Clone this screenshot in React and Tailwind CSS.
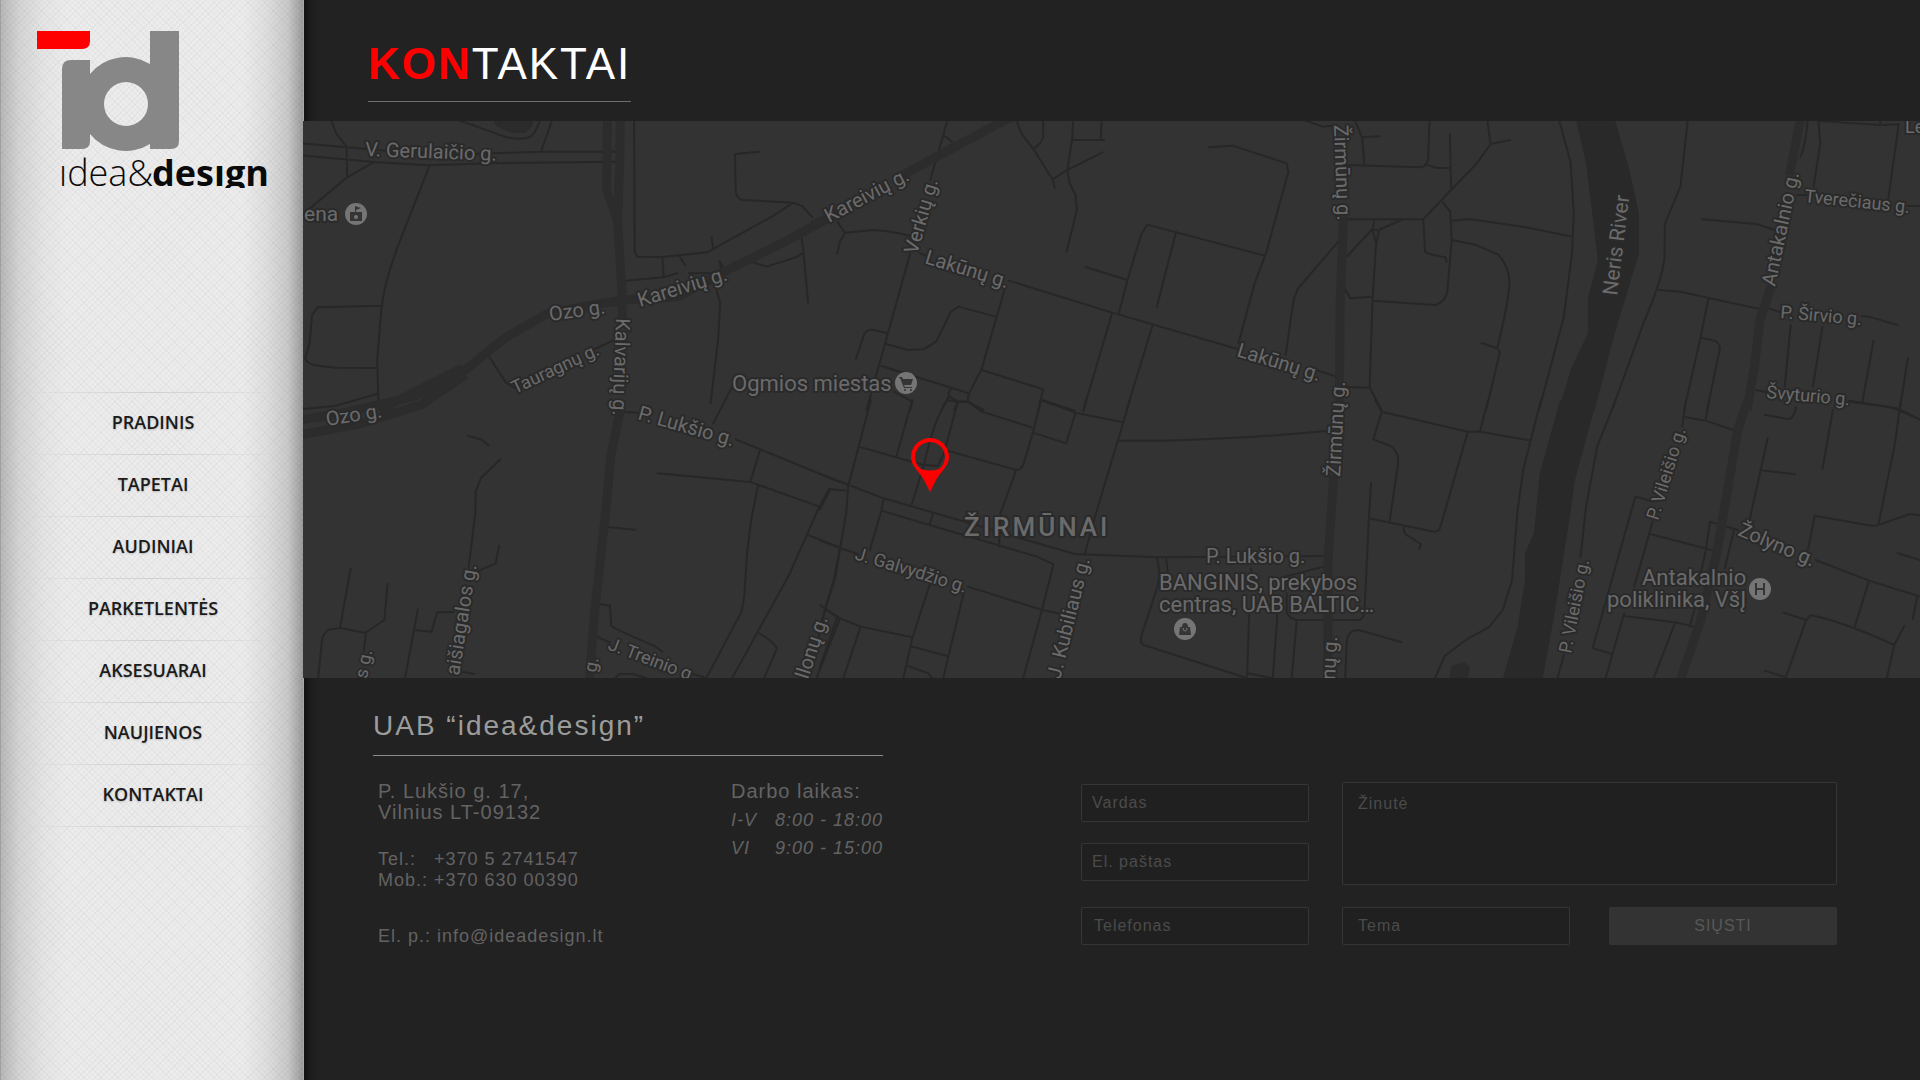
const NAV = ["PRADINIS", "TAPETAI", "AUDINIAI", "PARKETLENTĖS", "AKSESUARAI", "NAUJIENOS", "KONTAKTAI"];

// Map geometry is stored per tile; each tile has its own local units.
const TILES = [
  {
    at: "translate(300 120) scale(0.3444 0.3333)",
    main: [
      "M893 0L890 210L922 300L935 520L936 600",
      "M930 0L928 140L922 300",
      "M0 900L120 880L330 830L480 750L600 650L720 580L850 555L940 540L1100 530L1240 450L1400 370L1568 275",
      "M0 945L180 910L350 855L480 765",
      "M230 870L470 745",
    ],
    thin: [
      "M90 0L105 40L135 80L137 172", "M0 70L135 82L320 98L500 102L700 95L918 95", "M0 106L215 126L370 136L560 130L918 125",
      "M215 126L137 172L0 290", "M375 140L295 350Q245 480 236 570L224 720L228 860", "M236 557L52 562L35 585L28 670L15 715Q20 735 60 738L105 743L222 744",
      "M0 868L105 857L222 822", "M460 0L600 52Q660 65 680 40L698 0", "M732 0L700 94", "M970 0L972 395L980 410L1052 411L1182 397L1370 290L1432 248L1285 240Q1266 235 1265 210L1263 102L1333 95",
      "M1432 248L1458 258L1488 292", "M1195 350L1199 382", "M1052 411L1056 470", "M945 482L1056 472L1095 460", "M1103 411L1118 435", "M1130 460L1225 460L1218 422L1230 445",
      "M1318 428L1355 440L1440 412L1462 398L1456 350", "M1462 398L1475 548", "M1208 505L1220 550L1214 660L1192 850", "M550 712L598 788L625 805", "M850 690L915 658", "M1255 800L1200 910",
    ],
    areas: [["M560 0L570 18L610 38L655 38L675 18L678 0Z", "#2b2b2b"]],
  },
  {
    at: "translate(300 400) scale(0.3444 0.3333)",
    main: ["M930 30L903 165L888 330L870 500L855 640L840 840"],
    thin: [
      "M487 107L530 120L547 136", "M582 178L525 235L510 275L509 340L490 500", "M520 512L568 490L578 437", "M147 507L116 684L190 698L245 660L254 552", "M116 684L80 690L65 712L52 840", "M192 698L185 755",
      "M342 628L305 834", "M330 690L382 695L398 637L445 636", "M470 815L507 822", "M940 36L980 38", "M1265 118L1568 246", "M1335 152L1308 244", "M1038 220L1308 246L1508 320", "M893 381L972 389",
      "M1330 256L1310 360L1298 460L1290 590L1282 635L1180 834", "M1568 270L1536 268L1508 320L1420 525L1255 834", "M1474 405L1568 442L1550 540L1525 625L1500 740", "M1525 627L1568 655L1500 834", "M1328 697Q1370 720 1385 745L1348 834",
      "M870 612L900 617L904 678Q930 695 1030 738L1052 755", "M862 710L900 728", "M915 834L928 822L965 822L1005 834", "M1140 822L1180 834",
    ],
    areas: [],
  },
  {
    at: "translate(820 120) scale(0.3444 0.3333)",
    main: ["M-20 315L30 290", "M240 165L520 10L560 -10", "M1520 290L1510 560L1508 870"],
    thin: [
      "M370 0L358 45L320 180", "M358 45L383 65", "M50 305L72 338L58 365L50 402", "M72 338L155 330Q210 333 262 348", "M262 400L200 630L135 870", "M104 717L130 638Q140 628 155 630L198 640", "M192 672L255 690L300 688L338 664L380 575L402 560L510 590",
      "M536 508L470 745L432 822L428 845L475 870", "M178 738L432 820", "M382 805Q370 815 375 828L400 845L428 845", "M375 828L352 870", "M400 845L390 870", "M470 750L648 808L634 870", "M645 840L740 872",
      "M215 815L268 845L262 870", "M548 482L848 578L1215 688", "M290 400L310 408", "M570 0L585 40L620 88L675 178L682 203", "M648 0V50Q645 70 620 86", "M735 0L732 60L718 150L675 178", "M732 60H825", "M818 0L815 60", "M718 150L820 97",
      "M718 150L725 190L742 225L746 270L716 395", "M1130 82L1198 77L1355 130L1360 155L1295 400L1262 490L1215 670", "M1292 407L950 314L932 345L893 480L868 578", "M1034 335L978 560", "M770 441L893 480", "M848 580L765 870", "M966 615L890 870",
      "M1505 365L1388 505L1375 540L1352 705", "M1405 0L1460 20L1500 15", "M1440 750L1500 770",
    ],
    areas: [],
  },
  {
    at: "translate(820 400) scale(0.3444 0.3333)",
    main: ["M1492 225L1475 480L1475 840"],
    thin: [
      "M148 0L112 140L82 258L76 340L60 435L45 530L0 680", "M112 140L300 195L342 198", "M268 0L222 168", "M370 0Q330 60 303 190L266 315", "M400 5L360 160L342 198", "M370 0L400 5L430 5L470 35L615 82", "M370 152L570 210Q585 210 592 190L620 90L642 0", "M640 0L742 38L876 66", "M772 0L765 34",
      "M742 38L715 130L618 98", "M900 0L800 345L768 465", "M868 122H1000Q1250 115 1470 93", "M570 210L524 340L520 440", "M0 222L185 295L420 365L600 420L740 462L980 472L1460 468", "M185 295L178 332L318 375L630 470L678 493L645 628L590 834", "M328 340L318 375", "M178 332L145 450", "M0 422L60 445L110 462",
      "M430 560L645 630L700 642", "M318 555L268 715L242 834", "M418 575L358 834", "M0 615L50 652L118 680L268 712", "M50 652L0 800", "M118 680L68 834", "M268 740L370 768", "M252 797L315 820L325 834", "M82 272L30 268L0 328",
      "M978 472Q990 510 980 560L932 712Q930 730 940 735L1232 832", "M1005 475L1010 515", "M1246 645L1240 832", "M1328 645L1315 832", "M1240 820L1315 834", "M1384 662L1370 832", "M1355 580V635Q1360 655 1384 660H1568", "M1350 530L1462 500", "M1252 505V530",
    ],
    areas: [],
  },
  {
    at: "translate(1340 120) scale(0.37 0.3333)",
    main: ["M1244 0L1215 165", "M1165 500L1135 600L1120 740L1100 870"],
    thin: [
      "M40 0L60 55L66 135", "M60 52L107 49", "M242 0L238 120L232 133L262 144H298", "M0 134L215 142Q230 140 232 133", "M297 42L300 205", "M398 0L407 72L460 60", "M407 72L370 130L300 210L225 298H22", "M278 248L298 275L302 360L290 515Q285 545 258 555L88 542",
      "M302 302L350 297L510 323L628 350", "M302 360L365 374L428 404Q458 440 458 490Q455 550 425 685L432 697L395 870", "M382 669L425 685", "M592 0L623 125L632 280L627 400L605 590L538 870", "M225 298L230 395Q235 403 285 412L288 427", "M165 300L105 330L97 380L88 540L80 802L112 870",
      "M92 303L88 332L98 372", "M105 330H85L20 408", "M15 510L28 535L85 530", "M0 801L80 803", "M940 0L920 200L878 312L877 415Q870 480 820 610L735 870", "M862 510L920 515L1130 566", "M996 535L975 650L930 870", "M975 653L1015 663Q1030 675 1025 695L992 870", "M978 298L1125 312L1175 330",
      "M1264 0Q1258 80 1244 110", "M1293 0L1298 70L1280 200", "M1295 3L1460 15L1510 13L1482 235", "M1460 0V13", "M1235 225H1260", "M1533 258H1568", "M1160 566L1190 576", "M1410 588L1430 590L1507 615", "M1218 615L1202 800", "M1304 620L1278 800", "M1442 663L1412 845", "M1535 713L1513 868",
      "M1375 842L1510 866L1568 900", "M1125 810L1155 817",
    ],
    areas: [["M638 0L665 130L697 420L670 535V640L625 745L590 872H688L740 650L808 400V280L780 140L743 0Z", "#292929"]],
  },
  {
    at: "translate(1340 400) scale(0.37 0.3333)",
    main: ["M1102 0L1075 90L1052 240L1020 450L975 660L920 840"],
    thin: [
      "M95 0L113 35L345 95L380 95L512 121", "M113 35L90 118L140 140Q160 160 157 190L134 365", "M400 0L378 95", "M345 97L270 385Q265 395 255 395L78 355", "M84 248L78 355L66 640Q60 660 48 660H0", "M172 380Q170 400 185 408L218 432L215 447", "M543 0L495 210L480 330L465 540L440 630L402 682L340 720L283 768L257 834",
      "M745 0L695 140L665 320L650 470", "M605 765L588 834", "M165 726L50 690Q20 690 18 730L14 834", "M935 0L925 80", "M998 0L988 62", "M928 50L988 62L1068 92", "M845 305L798 290L683 744L735 762", "M845 365L795 560", "M768 640L718 834", "M838 402L1010 452", "M990 440L1000 365L1075 390", "M990 445L975 520", "M768 648L905 667L958 680", "M905 670L848 834", "M965 600L945 680",
      "M1065 390L1040 505", "M1156 115L1108 355", "M1136 210L1230 223", "M1148 44L1215 58Q1230 45 1232 22", "M1332 30L1304 207", "M1380 5L1490 22L1568 58", "M1516 0L1500 130L1455 375", "M1265 450L1283 347L1440 378L1455 375L1540 342L1568 346", "M1285 480L1430 542L1568 590", "M1430 542L1390 685",
      "M1507 460L1568 480", "M1560 590L1548 657", "M1198 638L1260 660L1272 645Q1360 665 1498 735L1478 834", "M1525 678L1498 735", "M1260 660L1205 832L1148 812",
    ],
    areas: [
      ["M595 0L540 220L524 400L500 460V540L480 680L440 836H548L580 640L622 345L635 240L694 0Z", "#292929"],
      ["M295 836L302 797L335 786L352 802L345 836Z", "#2b2b2b"],
    ],
  },
];

// text, x, y, rotation, size
const LABELS = [
  ["V. Gerulaičio g.", 365, 156, 2, 20], ["Kareivių g.", 640, 307, -17, 20], ["Ozo g.", 550, 321, -8, 20], ["Tauragnų g.", 515, 394, -25, 18],
  ["Kalvarijų g.", 616, 318, 92, 20], ["Ozo g.", 327, 426, -9, 20], ["P. Lukšio g.", 637, 419, 16, 20], ["aišiagalos g.", 459, 676, -81, 20], ["s g.", 367, 679, -80, 18],
  ["g.", 596, 673, -80, 18], ["J. Treinio g.", 607, 649, 21, 18], ["llonų g.", 808, 680, -72, 20], ["Kareivių g.", 829, 223, -28, 20], ["Verkių g.", 917, 255, -74, 20],
  ["Lakūnų g.", 924, 263, 17, 20], ["Lakūnų g.", 1236, 356, 17, 20], ["Ogmios miestas", 732, 391, 0, 22], ["Žirmūnų g.", 1334, 125, 88, 20], ["Žirmūnų g.", 1340, 477, -87, 20],
  ["nų g.", 1335, 680, -87, 20], ["J. Galvydžio g.", 854, 559, 17, 18], ["J. Kubiliaus g.", 1060, 680, -76, 20], ["P. Lukšio g.", 1206, 563, 0, 20],
  ["BANGINIS, prekybos", 1159, 590, 0, 22], ["centras, UAB BALTIC…", 1159, 612, 0, 22], ["Neris River", 1617, 296, -83, 21], ["Antakalnio g.", 1775, 287, -78, 20],
  ["Tverečiaus g.", 1804, 202, 6, 18], ["Le", 1905, 133, 0, 18], ["P. Širvio g.", 1780, 318, 5, 18], ["Švyturio g.", 1766, 398, 5, 18], ["P. Vileišio g.", 1658, 521, -73, 18],
  ["P. Vileišio g.", 1571, 654, -79, 18], ["Žolyno g.", 1737, 535, 23, 20], ["Antakalnio", 1642, 585, 0, 22], ["poliklinika, VšĮ", 1607, 607, 0, 22], ["ena", 304, 221, 0, 21],
];

function Logo() {
  return (
    <svg viewBox="37 31 233 157" className="block w-[233px]" role="img" aria-label="idea&design">
      <path d="M37 31H90V41Q90 49 82 49H37Z" fill="#f00" />
      <path
        d="M62 69Q62 60 71 60H90V74A46 46 0 0 1 150 64V31H179V141Q179 149 171 149H150V144A46 46 0 0 1 90 134V141Q90 149 82 149H62Z M126 82a22 22 0 1 0 0 44a22 22 0 1 0 0 -44Z"
        fill="#878787"
        fillRule="evenodd"
      />
      <text y="186" fontSize="36" fill="#0a0a0a" className="font-['Open_Sans',sans-serif]">
        <tspan x="59" fontWeight="300">ıdea&amp;</tspan>
        <tspan x="152" fontWeight="700">desıgn</tspan>
      </text>
    </svg>
  );
}

function CityMap() {
  return (
    <svg viewBox="303 121 1617 557" preserveAspectRatio="xMidYMid slice" className="block w-full bg-[#333]" role="img" aria-label="Žirmūnai">
      {TILES.map((t) => (
        <g key={t.at} transform={t.at} fill="none" strokeLinejoin="round">
          {t.areas.map(([d, c]) => <path key={d} d={d} fill={c} />)}
          <path d={t.thin.join("")} stroke="#272727" strokeWidth="2" vectorEffect="non-scaling-stroke" strokeLinecap="round" />
          <path d={t.main.join("")} stroke="#2c2c2c" strokeWidth="9" vectorEffect="non-scaling-stroke" />
        </g>
      ))}
      <g fill="#6a6a6a" stroke="#2a2a2a" strokeWidth="4" strokeLinejoin="round" style={{ paintOrder: "stroke" }} className="font-[Roboto,sans-serif]">
        {LABELS.map(([text, x, y, r, size]) => (
          <text key={`${x}-${y}`} fontSize={size} transform={`translate(${x} ${y}) rotate(${r})`}>{text}</text>
        ))}
        <text x="964" y="536" fontSize="26" fontWeight="500" letterSpacing="3">ŽIRMŪNAI</text>
      </g>
      <g fill="#757575">
        <circle cx="356" cy="214" r="11" />
        <circle cx="906" cy="383" r="11" />
        <circle cx="1185" cy="629" r="11" />
        <circle cx="1760" cy="589" r="11" />
      </g>
      <g fill="#353535">
        <path d="M355 206l6 2l-5 2v2h6v9h-12v-9h5Z" />
        <circle cx="356" cy="217" r="2" fill="#757575" />
        <path d="M899 377h3l1 2h10l-2 6h-7l1 2h7v1h-8l-4-10h-1Z" />
        <circle cx="905" cy="390" r="1" />
        <circle cx="911" cy="390" r="1" />
        <path d="M1180 627h2a3 4 0 0 1 6 0h2l1 8h-12Z" />
        <path d="M1183 628a2 3 0 0 0 4 0" fill="none" stroke="#757575" />
        <path d="M1755 583h2v5h6v-5h2v12h-2v-5h-6v5h-2Z" />
      </g>
      <path
        d="M930 492L924 480C919 471 911 466 911 457A19 19 0 0 1 949 457C949 466 941 471 936 480Z M930 442a15 15 0 0 0 -9 27q9 3 18 0a15 15 0 0 0 -9 -27Z"
        fill="#f00"
        fillRule="evenodd"
      />
    </svg>
  );
}

const field =
  "block w-full rounded-[2px] border border-[#353535] bg-[#202020] text-base tracking-[1px] text-[#8a8a8a] placeholder:text-[#4b4b4b] placeholder:opacity-100 outline-none focus:border-[#666]";

export default function App() {
  return (
    <div className="flex min-h-screen bg-[#222] font-['Liberation_Sans',Arial,sans-serif]">
      <aside className="w-[304px] shrink-0 border-x border-l-[#a0a0a0] border-r-[#a8a8a8] bg-[#ececec] bg-[linear-gradient(90deg,rgba(0,0,0,0.22)_0%,rgba(0,0,0,0.1)_6%,rgba(0,0,0,0.03)_14%,transparent_22%,transparent_80%,rgba(0,0,0,0.06)_88%,rgba(0,0,0,0.15)_95%,rgba(0,0,0,0.34)_100%),repeating-linear-gradient(45deg,rgba(0,0,0,0.03)_0_1px,transparent_1px_4px),repeating-linear-gradient(135deg,rgba(0,0,0,0.03)_0_1px,transparent_1px_4px)]">
        <a href="#" className="block pt-[31px] pl-9">
          <Logo />
        </a>
        <nav className="mt-[204px] font-['Open_Sans',sans-serif] text-lg font-semibold text-[#1b1b1b] [text-shadow:0_1px_2px_rgba(0,0,0,0.2)]">
          <ul>
            {NAV.map((n) => (
              <li key={n}>
                <div className="h-px bg-linear-to-r from-transparent via-[#cfcfcf] to-transparent" />
                <a href="#" className="block pt-[17px] pb-[19px] pl-0.5 text-center leading-[25px]">{n}</a>
              </li>
            ))}
          </ul>
          <div className="h-px bg-linear-to-r from-transparent via-[#cfcfcf] to-transparent" />
        </nav>
      </aside>

      <main className="min-w-0 flex-1 bg-[linear-gradient(90deg,#121212_0,#1d1d1d_7px,#222_16px)]">
        <header className="flex h-[121px] items-start pt-[38px] pl-16">
          <h1 className="border-b border-[#6e6e6e] pb-[11px] text-[44px] leading-[52px] tracking-[2px] text-white">
            <span className="font-bold text-[#f00]">KON</span>TAKTAI
          </h1>
        </header>

        <div className="-ml-px">
          <CityMap />
        </div>

        <div className="flex flex-wrap justify-between gap-8 pt-[30px] pr-[83px] pl-[69px]">
          <section className="w-full max-w-[510px] text-[#636363]">
            <h2 className="border-b border-[#8c8c8c] pb-3 text-[28px] leading-[35px] tracking-[2px] text-[#9c9c9c]">UAB “idea&amp;design”</h2>
            <div className="flex justify-between pt-[25px] pl-[5px]">
              <address className="not-italic">
                <p className="text-xl leading-[21px] tracking-[1px]">P. Lukšio g. 17,<br />Vilnius LT-09132</p>
                <p className="mt-[26px] text-lg leading-[21px] tracking-[1px] whitespace-pre">{"Tel.:   "}<a href="tel:+37052741547">+370 5 2741547</a><br />Mob.: <a href="tel:+37063000390">+370 630 00390</a></p>
                <p className="mt-[35px] text-lg leading-[21px] tracking-[1px]">El. p.: <a href="mailto:info@ideadesign.lt">info@ideadesign.lt</a></p>
              </address>
              <table className="h-fit w-[152px] text-left">
                <caption className="pb-1 text-left text-xl leading-[21px] tracking-[1px]">Darbo laikas:</caption>
                <tbody className="text-lg leading-7 tracking-[1px] italic">
                  <tr><th scope="row" className="p-0 font-normal">I-V</th><td className="p-0 text-right">8:00 - 18:00</td></tr>
                  <tr><th scope="row" className="p-0 font-normal">VI</th><td className="p-0 text-right">9:00 - 15:00</td></tr>
                </tbody>
              </table>
            </div>
          </section>

          <form className="mt-[74px] grid w-full max-w-[756px] grid-cols-[228fr_495fr] content-start gap-x-[33px] gap-y-[22px]" onSubmit={(e) => e.preventDefault()}>
            <div className="flex flex-col gap-[21px] pt-[2px]">
              <input aria-label="Vardas" placeholder="Vardas" className={`${field} h-[38px] px-2.5`} />
              <input aria-label="El. paštas" type="email" placeholder="El. paštas" className={`${field} h-[38px] px-2.5`} />
            </div>
            <textarea aria-label="Žinutė" placeholder="Žinutė" className={`${field} h-[103px] resize-none px-[15px] py-[11px] leading-5`} />
            <input aria-label="Telefonas" type="tel" placeholder="Telefonas" className={`${field} h-[38px] px-3`} />
            <div className="grid grid-cols-2 gap-[39px]">
              <input aria-label="Tema" placeholder="Tema" className={`${field} h-[38px] px-[15px]`} />
              <button type="submit" className="h-[38px] rounded-[2px] bg-[#333] text-base tracking-[1px] text-[#585858]">SIŲSTI</button>
            </div>
          </form>
        </div>
      </main>
    </div>
  );
}
